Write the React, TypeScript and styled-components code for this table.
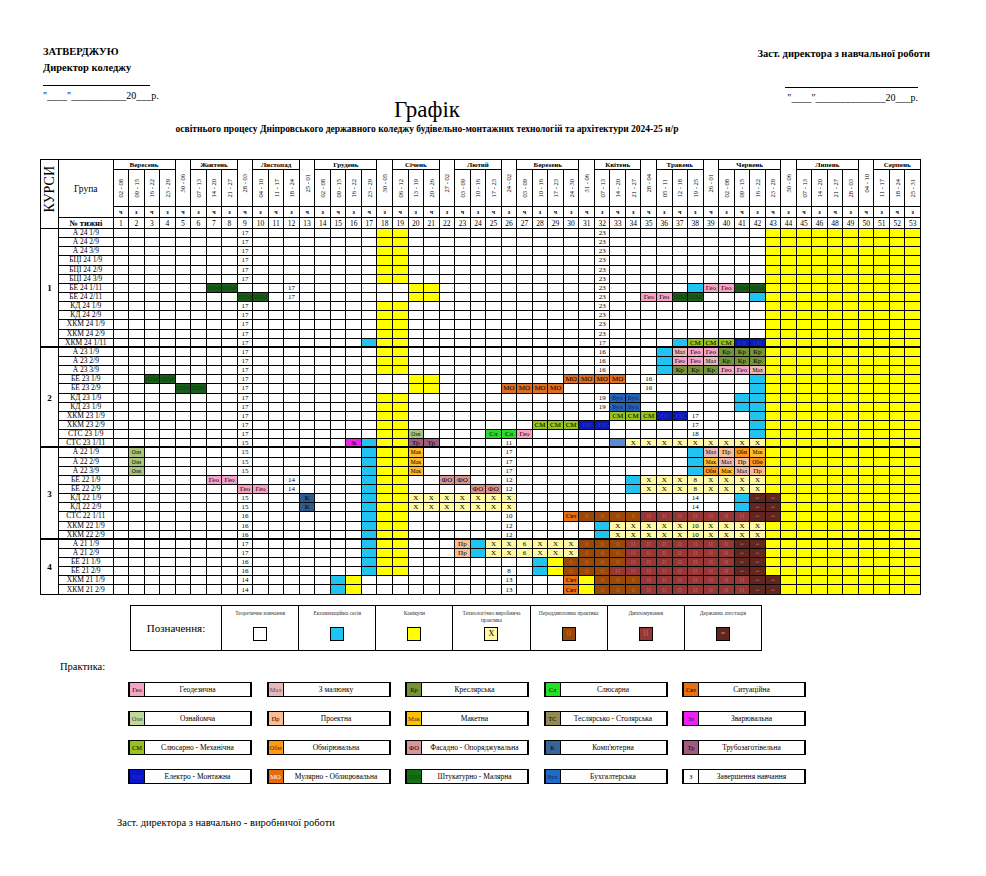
import React from "react";
import styled, { createGlobalStyle } from "styled-components";

const GlobalStyle = createGlobalStyle`
  html, body {
    margin: 0;
    padding: 0;
    background: #fff;
  }
  body {
    font-family: "Liberation Serif", "Times New Roman", serif;
    color: #000;
  }
`;

type Tone = { bg: string; fg?: string; text?: string; small?: boolean };

const TONES: Record<string, Tone> = {
  y: { bg: "#ffff00" },
  c: { bg: "#21c3f1" },
  m: { bg: "#5b8bd0" },
  x: { bg: "#fffaa3", text: "Х" },
  b: { bg: "#984808", fg: "#d0652a", text: "0" },
  d: { bg: "#943735", fg: "#c25c5a", text: "ІІ" },
  a: { bg: "#60261f", fg: "#b07068", text: "=" },
  Гео: { bg: "#f5a3c7", text: "Гео" },
  Мал: { bg: "#e6b9b8", text: "Мал", small: true },
  Кр: { bg: "#76933c", text: "Кр" },
  Сл: { bg: "#2ed82e", text: "Сл" },
  Свт: { bg: "#e8700e", text: "Свт" },
  Озн: { bg: "#a9c47c", text: "Озн", small: true },
  Пр: { bg: "#f9bf92", text: "Пр" },
  Мак: { bg: "#fcbc2c", text: "Мак", small: true },
  ТС: { bg: "#948a54", text: "ТС" },
  Зв: { bg: "#f21ff2", text: "Зв", small: true },
  СМ: { bg: "#96c31d", text: "СМ" },
  Обм: { bg: "#f9981f", text: "Обм", small: true },
  ФО: { bg: "#d99694", text: "ФО" },
  К: { bg: "#2f5a8c", text: "К" },
  Тр: { bg: "#a25a7e", text: "Тр" },
  ЕМ: { bg: "#0c1ab4", fg: "#2535dd", text: "ЕМ", small: true },
  МО: { bg: "#dc6e26", text: "МО" },
  ШМ: { bg: "#1b5e1b", fg: "#0a3d0a", text: "ШМ" },
  Бух: { bg: "#2463b4", fg: "#0b2a66", text: "Бух" },
};

type Cell = { tone?: Tone; text?: string };

const parseRow = (spec: string): Cell[] => {
  const cells: Cell[] = Array.from({ length: 52 }, () => ({}));
  spec.split(" ").forEach((tok) => {
    const [range, value] = tok.split(":");
    const [from, to] = range.split("-").map(Number);
    const [code, label] = value.split("=");
    const tone = TONES[code];
    for (let i = from; i <= (to || from); i++) {
      cells[i - 1] = tone ? { tone, text: label ?? tone.text } : { text: code };
    }
  });
  return cells;
};

const MONTHS: [string, number, number][] = [
  ["Вересень", 1, 4],
  ["Жовтень", 6, 3],
  ["Листопад", 10, 3],
  ["Грудень", 14, 4],
  ["Січень", 19, 3],
  ["Лютий", 23, 3],
  ["Березень", 27, 4],
  ["Квітень", 32, 3],
  ["Травень", 36, 3],
  ["Червень", 40, 4],
  ["Липень", 45, 4],
  ["Серпень", 50, 3],
];

const BOUNDARY = [5, 9, 13, 18, 22, 26, 31, 35, 39, 44, 49];

const DATES = [
  "02 - 08", "09 - 15", "16 - 22", "23 - 29", "30 - 06", "07 - 13", "14 - 20",
  "21 - 27", "28 - 03", "04 - 10", "11 - 17", "18 - 24", "25 - 01", "02 - 08",
  "09 - 15", "16 - 22", "23 - 29", "30 - 05", "06 - 12", "13 - 19", "20 - 26",
  "27 - 02", "03 - 09", "10 - 16", "17 - 23", "24 - 02", "03 - 09", "10 - 16",
  "17 - 23", "24 - 30", "31 - 06", "07 - 13", "14 - 20", "21 - 27", "28 - 04",
  "05 - 11", "12 - 18", "19 - 25", "26 - 01", "02 - 08", "09 - 15", "16 - 22",
  "23 - 29", "30 - 06", "07 - 13", "14 - 20", "21 - 27", "28 - 03", "04 - 10",
  "11 - 17", "18 - 24", "25 - 31",
];

const WEEKS = [
  ...Array.from({ length: 46 }, (_, i) => i + 1),
  48, 49, 50, 51, 52, 53,
];

const B1 = "9:17 18-19:y 32:23 43-52:y";
const KD23 = "9:17 18-19:y 32:19 33-34:Бух 41-42:c 43-52:y";
const KD22 = "9:15 13:К 17:c 18-19:y 20-26:x 38:14 41:c 42-43:a 44-52:y";
const XKM22 = "9:16 17:c 18-19:y 26:12 32:c 33-37:x 38:x=10 39-42:x 43-52:y";
const A21 = "9:17 17:c 18-19:y 23:Пр 24:c 25-26:x 27:x=6 28-30:x 31-33:b 34-40:d 41-42:a 43-52:y";
const XKM21 = "9:14 15:c 16:y 26:13 30:Свт 31:y 32-34:b 35-41:d 42-43:a 44-52:y";

const COURSES: { no: string; rows: [string, string][] }[] = [
  {
    no: "1",
    rows: [
      ["А 24 1/9", B1],
      ["А 24 2/9", B1],
      ["А 24 3/9", B1],
      ["БЦІ 24 1/9", B1],
      ["БЦІ 24 2/9", B1],
      ["БЦІ 24 3/9", B1],
      ["БЕ 24 1/11", "7-8:ШМ 12:17 20-21:y 32:23 38:c 39-40:Гео 41-42:ШМ 43-52:y"],
      ["БЕ 24 2/11", "9-10:ШМ 12:17 20-21:y 32:23 35-36:Гео 37-38:ШМ 42:c 43-52:y"],
      ["КД 24 1/9", B1],
      ["КД 24 2/9", B1],
      ["ХКМ 24 1/9", B1],
      ["ХКМ 24 2/9", B1],
      ["ХКМ 24 1/11", "9:17 17:c 18-19:y 32:17 37:c 38-40:СМ 41-42:ЕМ 43-52:y"],
    ],
  },
  {
    no: "2",
    rows: [
      ["А 23 1/9", "9:17 18-19:y 32:16 36:c 37:Мал 38-39:Гео 40-42:Кр 43-52:y"],
      ["А 23 2/9", "9:17 18-19:y 32:16 36:c 37-38:Гео 39:Мал 40-42:Кр 43-52:y"],
      ["А 23 3/9", "9:17 18-19:y 32:16 36:c 37-39:Кр 40-41:Гео 42:Мал 43-52:y"],
      ["БЕ 23 1/9", "3-4:ШМ 9:17 20-21:y 30-33:МО 35:16 42:c 43-52:y"],
      ["БЕ 23 2/9", "5-6:ШМ 9:17 20-21:y 26-29:МО 35:16 42:c 43-52:y"],
      ["КД 23 1/9", KD23],
      ["КД 23 1/9", KD23],
      ["ХКМ 23 1/9", "9:17 18-19:y 33-35:СМ 36-37:ЕМ 38:17 42:c 43-52:y"],
      ["ХКМ 23 2/9", "9:17 18-19:y 28-30:СМ 31-32:ЕМ 38:17 42:c 43-52:y"],
      ["СТС 23 1/9", "9:17 18-19:y 20:Озн 25-26:Сл 27:Гео 38:18 42:c 43-52:y"],
      ["СТС 23 1/11", "9:15 16:Зв 17:c 18-19:y 20-21:Тр 26:11 33:m 34-42:x 43-52:y"],
    ],
  },
  {
    no: "3",
    rows: [
      ["А 22 1/9", "2:Озн 9:15 17:c 18-19:y 20:Мак 26:17 38:c 39:Мал 40:Пр 41:Обм 42:Мак 43-52:y"],
      ["А 22 2/9", "2:Озн 9:15 17:c 18-19:y 20:Мак 26:17 38:c 39:Мак 40:Мал 41:Пр 42:Обм 43-52:y"],
      ["А 22 3/9", "2:Озн 9:15 17:c 18-19:y 20:Мак 26:17 38:c 39:Обм 40:Мак 41:Мал 42:Пр 43-52:y"],
      ["БЕ 22 1/9", "7-8:Гео 12:14 17:c 18-19:y 22-23:ФО 26:12 34:c 35-37:x 38:x=8 39-42:x 43-52:y"],
      ["БЕ 22 2/9", "9-10:Гео 12:14 17:c 18-19:y 24-25:ФО 26:12 34:c 35-37:x 38:x=8 39-42:x 43-52:y"],
      ["КД 22 1/9", KD22],
      ["КД 22 2/9", KD22],
      ["СТС 22 1/11", "9:16 17:c 18-19:y 26:10 30:Свт 31-34:b 35-41:d 42-43:a 44-52:y"],
      ["ХКМ 22 1/9", XKM22],
      ["ХКМ 22 2/9", XKM22],
    ],
  },
  {
    no: "4",
    rows: [
      ["А 21 1/9", A21],
      ["А 21 2/9", A21],
      ["БЕ 21 1/9", "9:16 17:c 18-19:y 28:c 29:y 30-33:b 34-40:d 41-42:a 43-52:y"],
      ["БЕ 21 2/9", "9:16 17:c 18-19:y 26:8 28:c 29:y 30-32:b 33-40:d 41-42:a 43-52:y"],
      ["ХКМ 21 1/9", XKM21],
      ["ХКМ 21 2/9", XKM21],
    ],
  },
];

const LEGEND = [
  { label: "Теоретичне навчання", bg: "#fff" },
  { label: "Екзаменаційна сесія", bg: "#21c3f1" },
  { label: "Канікули", bg: "#ffff00" },
  { label: "Технологічно виробнича практика", bg: "#fffaa3", mark: "Х", fg: "#000" },
  { label: "Переддипломна практика", bg: "#984808", mark: "0", fg: "#e0702e" },
  { label: "Дипломування", bg: "#943735", mark: "ІІ", fg: "#c86462" },
  { label: "Державна атестація", bg: "#60261f", mark: "=", fg: "#c08078" },
];

const PRACTICE: [string, string, string, string][] = [
  ["Гео", "Геодезична", "#f5a3c7", "#000"],
  ["Мал", "З малюнку", "#e6b9b8", "#555"],
  ["Кр", "Креслярська", "#76933c", "#000"],
  ["Сл", "Слюсарна", "#22e022", "#000"],
  ["Свт", "Ситуаційна", "#e8700e", "#000"],
  ["Озн", "Ознайомча", "#c4d79b", "#444"],
  ["Пр", "Проектна", "#f9bf92", "#000"],
  ["Мак", "Макетна", "#ffc000", "#333"],
  ["ТС", "Теслярсько - Столярська", "#948a54", "#000"],
  ["Зв", "Зварювальна", "#f21ff2", "#333"],
  ["СМ", "Слюсарно - Механічна", "#96c31d", "#000"],
  ["Обм", "Обмірювальна", "#ff9a12", "#333"],
  ["ФО", "Фасадно - Опоряджувальна", "#d99694", "#000"],
  ["К", "Комп'ютерна", "#37649a", "#000"],
  ["Тр", "Трубозаготівельна", "#a25a7e", "#000"],
  ["ЕМ", "Електро - Монтажна", "#0a14c8", "#1f2ee0"],
  ["МО", "Мулярно - Облицювальна", "#e46c0a", "#fff"],
  ["ШМ", "Штукатурно - Малярна", "#137113", "#0c4d0c"],
  ["Бух", "Бухгалтерська", "#1f6bc6", "#0b2a66"],
  ["З", "Завершення навчання", "#fff", "#000"],
];

// Page frame and the approval header
const Page = styled.div`
  width: 986px;
  height: 876px;
  box-sizing: border-box;
  padding: 46px 0 0 40px;
`;

const TopRow = styled.div`
  display: flex;
  justify-content: space-between;
  align-items: flex-start;
  width: 890px;
  padding-left: 3px;
  box-sizing: border-box;
`;

const ApproveBlock = styled.div`
  display: flex;
  flex-direction: column;
  align-items: flex-start;
`;

const RightBlock = styled.div`
  display: flex;
  flex-direction: column;
  align-items: flex-end;
  padding-top: 2px;
`;

const BoldLine = styled.div<{ $gap?: number }>`
  font-size: 10.5px;
  line-height: 12px;
  font-weight: bold;
  margin-top: ${(p) => p.$gap ?? 0}px;
  white-space: nowrap;
`;

const SignLine = styled.div<{ $width: number; $gap: number; $right?: number }>`
  width: ${(p) => p.$width}px;
  height: ${(p) => p.$gap}px;
  border-bottom: 1px solid #000;
  margin-right: ${(p) => p.$right ?? 0}px;
`;

const DateLine = styled.div<{ $right?: number }>`
  font-size: 10px;
  line-height: 12px;
  margin-top: 4px;
  margin-right: ${(p) => p.$right ?? 0}px;
  white-space: nowrap;
`;

const TitleBlock = styled.div`
  width: 881px;
  box-sizing: border-box;
  padding-right: 107px;
  margin-top: -7px;
  text-align: center;
`;

const Title = styled.h1`
  margin: 0;
  font-size: 23px;
  line-height: 26px;
  font-weight: normal;
`;

const Subtitle = styled.div`
  font-size: 9.5px;
  line-height: 12px;
  font-weight: bold;
  white-space: nowrap;
`;

// Schedule table
const Schedule = styled.div`
  display: grid;
  width: 881px;
  box-sizing: border-box;
  margin-top: 24px;
  padding: 1px;
  gap: 1px;
  background: #000;
  grid-template-columns: 17px 53.5px repeat(52, minmax(0, 1fr));
  grid-template-rows: 9px 36px 10px 10px repeat(40, 8.15px);
`;

const Head = styled.div<{ $c: number; $cs?: number; $r: number; $rs?: number }>`
  grid-column: ${(p) => p.$c} / span ${(p) => p.$cs ?? 1};
  grid-row: ${(p) => p.$r} / span ${(p) => p.$rs ?? 1};
  background: #fff;
  display: flex;
  align-items: center;
  justify-content: center;
  overflow: hidden;
  white-space: nowrap;
`;

const CoursesHead = styled(Head)`
  font-size: 14px;
  padding-bottom: 10px;
`;

const GroupHead = styled(Head)`
  font-size: 9.5px;
`;

const WeekHead = styled(Head)`
  font-size: 8.5px;
  font-weight: bold;
`;

const MonthHead = styled(Head)`
  font-size: 7px;
  font-weight: bold;
`;

const DateHead = styled(Head)`
  font-size: 6.5px;
`;

const ParityHead = styled(Head)`
  font-size: 6px;
  font-weight: bold;
`;

const WeekNo = styled(Head)`
  font-size: 7.5px;
`;

const Vertical = styled.span`
  writing-mode: vertical-rl;
  transform: rotate(180deg);
`;

const CourseNo = styled.div<{ $r: number; $rs: number; $sep: boolean }>`
  grid-column: 1;
  grid-row: ${(p) => p.$r} / span ${(p) => p.$rs};
  background: #fff;
  display: flex;
  align-items: center;
  justify-content: center;
  font-size: 9px;
  font-weight: bold;
  ${(p) => p.$sep && "box-shadow: inset 0 -1px 0 #000;"}
`;

const GroupName = styled.div<{ $sep: boolean }>`
  background: #fff;
  display: flex;
  align-items: center;
  justify-content: center;
  font-size: 7.5px;
  line-height: 8px;
  white-space: nowrap;
  overflow: hidden;
  ${(p) => p.$sep && "box-shadow: inset 0 -1px 0 #000;"}
`;

const Day = styled.div<{ $bg: string; $fg: string; $small: boolean; $sep: boolean }>`
  background: ${(p) => p.$bg};
  color: ${(p) => p.$fg};
  font-size: ${(p) => (p.$small ? 5.5 : 7)}px;
  line-height: 8px;
  display: flex;
  align-items: center;
  justify-content: center;
  white-space: nowrap;
  overflow: hidden;
  ${(p) => p.$sep && "box-shadow: inset 0 -1px 0 #000;"}
`;

// Legend
const Legend = styled.div`
  display: grid;
  grid-template-columns: 90px repeat(7, 1fr);
  width: 632px;
  height: 46px;
  box-sizing: border-box;
  margin: 10px 0 0 90px;
  border: 1px solid #000;
`;

const LegendCaption = styled.div`
  display: flex;
  align-items: center;
  justify-content: center;
  font-size: 11px;
`;

const LegendItem = styled.div`
  display: flex;
  flex-direction: column;
  align-items: center;
  padding-top: 4px;
  border-left: 1px solid #000;
`;

const LegendLabel = styled.div`
  height: 15px;
  font-size: 5.5px;
  line-height: 7px;
  color: #333;
  text-align: center;
  padding: 0 6px;
`;

const Swatch = styled.div<{ $bg: string; $fg: string }>`
  width: 14px;
  height: 14px;
  box-sizing: border-box;
  margin-top: 2px;
  border: 1px solid #000;
  background: ${(p) => p.$bg};
  color: ${(p) => p.$fg};
  font-size: 8px;
  line-height: 12px;
  text-align: center;
`;

// Practice kinds
const PracticeTitle = styled.div`
  margin: 10px 0 0 20px;
  font-size: 10.5px;
  line-height: 12px;
`;

const PracticeGrid = styled.div`
  display: grid;
  grid-template-columns: repeat(5, 124px);
  column-gap: 14.5px;
  row-gap: 14px;
  margin: 9px 0 0 88px;
`;

const PracticeItem = styled.div`
  display: grid;
  grid-template-columns: 15px 1fr;
  height: 15px;
  box-sizing: border-box;
  border: 1px solid #000;
  border-left-width: 2px;
  border-right-width: 2px;
`;

const PracticeCode = styled.div<{ $bg: string; $fg: string }>`
  background: ${(p) => p.$bg};
  color: ${(p) => p.$fg};
  border-right: 1px solid #000;
  font-size: 6.5px;
  display: flex;
  align-items: center;
  justify-content: center;
  white-space: nowrap;
  overflow: hidden;
`;

const PracticeName = styled.div`
  font-size: 7.5px;
  display: flex;
  align-items: center;
  justify-content: center;
  white-space: nowrap;
`;

const Footer = styled.div`
  margin: 33px 0 0 77px;
  font-size: 10.5px;
  line-height: 12px;
`;

const ScheduleTable = () => {
  let row = 5;
  const body: React.ReactNode[] = [];
  COURSES.forEach((course, ci) => {
    const sep = ci < COURSES.length - 1;
    body.push(
      <CourseNo key={`c${ci}`} $r={row} $rs={course.rows.length} $sep={sep}>
        {course.no}
      </CourseNo>
    );
    course.rows.forEach(([name, spec], ri) => {
      const last = sep && ri === course.rows.length - 1;
      body.push(
        <GroupName key={`g${row}`} $sep={last}>
          {name}
        </GroupName>
      );
      parseRow(spec).forEach((cell, i) => {
        body.push(
          <Day
            key={`d${row}-${i}`}
            $bg={cell.tone?.bg ?? "#fff"}
            $fg={cell.tone?.fg ?? "#000"}
            $small={!!cell.tone?.small}
            $sep={last}
          >
            {cell.text}
          </Day>
        );
      });
      row += 1;
    });
  });

  return (
    <Schedule>
      <CoursesHead $c={1} $r={1} $rs={4}>
        <Vertical>КУРСИ</Vertical>
      </CoursesHead>
      <GroupHead $c={2} $r={1} $rs={3}>
        Група
      </GroupHead>
      <WeekHead $c={2} $r={4}>
        № тижні
      </WeekHead>
      {MONTHS.map(([name, start, span]) => (
        <MonthHead key={name} $c={start + 2} $cs={span} $r={1}>
          {name}
        </MonthHead>
      ))}
      {DATES.map((d, i) => {
        const boundary = BOUNDARY.includes(i + 1);
        return (
          <DateHead
            key={`dt${i}`}
            $c={i + 3}
            $r={boundary ? 1 : 2}
            $rs={boundary ? 2 : 1}
          >
            <Vertical>{d}</Vertical>
          </DateHead>
        );
      })}
      {DATES.map((_, i) => (
        <ParityHead key={`p${i}`} $c={i + 3} $r={3}>
          {i % 2 === 0 ? "ч" : "з"}
        </ParityHead>
      ))}
      {WEEKS.map((w, i) => (
        <WeekNo key={`w${i}`} $c={i + 3} $r={4}>
          {w}
        </WeekNo>
      ))}
      {body}
    </Schedule>
  );
};

export default function App() {
  return (
    <Page>
      <GlobalStyle />
      <TopRow>
        <ApproveBlock>
          <BoldLine>ЗАТВЕРДЖУЮ</BoldLine>
          <BoldLine $gap={4}>Директор коледжу</BoldLine>
          <SignLine $width={107} $gap={11} />
          <DateLine>"____"___________20___р.</DateLine>
        </ApproveBlock>
        <RightBlock>
          <BoldLine>Заст. директора з навчальної роботи</BoldLine>
          <SignLine $width={133} $gap={27} $right={12} />
          <DateLine $right={12}>"____"______________20___р.</DateLine>
        </RightBlock>
      </TopRow>

      <TitleBlock>
        <Title>Графік</Title>
        <Subtitle>
          освітнього процесу Дніпровського державного коледжу будівельно-монтажних
          технологій та архітектури 2024-25 н/р
        </Subtitle>
      </TitleBlock>

      <ScheduleTable />

      <Legend>
        <LegendCaption>Позначення:</LegendCaption>
        {LEGEND.map((item) => (
          <LegendItem key={item.label}>
            <LegendLabel>{item.label}</LegendLabel>
            <Swatch $bg={item.bg} $fg={item.fg ?? "#000"}>
              {item.mark}
            </Swatch>
          </LegendItem>
        ))}
      </Legend>

      <PracticeTitle>Практика:</PracticeTitle>
      <PracticeGrid>
        {PRACTICE.map(([code, name, bg, fg]) => (
          <PracticeItem key={name}>
            <PracticeCode $bg={bg} $fg={fg}>
              {code}
            </PracticeCode>
            <PracticeName>{name}</PracticeName>
          </PracticeItem>
        ))}
      </PracticeGrid>

      <Footer>Заст. директора з навчально - виробничої роботи</Footer>
    </Page>
  );
}
